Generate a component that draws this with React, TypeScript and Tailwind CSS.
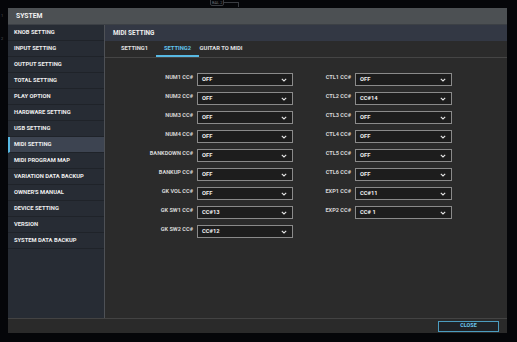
import React from "react";

const sideItems = [
  "KNOB SETTING",
  "INPUT SETTING",
  "OUTPUT SETTING",
  "TOTAL SETTING",
  "PLAY OPTION",
  "HARDWARE SETTING",
  "USB SETTING",
  "MIDI SETTING",
  "MIDI PROGRAM MAP",
  "VARIATION DATA BACKUP",
  "OWNER'S MANUAL",
  "DEVICE SETTING",
  "VERSION",
  "SYSTEM DATA BACKUP",
];

const leftRows: [string, string][] = [
  ["NUM1 CC#", "OFF"],
  ["NUM2 CC#", "OFF"],
  ["NUM3 CC#", "OFF"],
  ["NUM4 CC#", "OFF"],
  ["BANKDOWN CC#", "OFF"],
  ["BANKUP CC#", "OFF"],
  ["GK VOL CC#", "OFF"],
  ["GK SW1 CC#", "CC#13"],
  ["GK SW2 CC#", "CC#12"],
];

const rightRows: [string, string][] = [
  ["CTL1 CC#", "OFF"],
  ["CTL2 CC#", "CC#14"],
  ["CTL3 CC#", "OFF"],
  ["CTL4 CC#", "OFF"],
  ["CTL5 CC#", "OFF"],
  ["CTL6 CC#", "OFF"],
  ["EXP1 CC#", "CC#11"],
  ["EXP2 CC#", "CC# 1"],
];

function Chevron() {
  return (
    <svg width="6" height="4" viewBox="0 0 6 4" className="shrink-0">
      <path d="M0.8 0.8 L3 3 L5.2 0.8" fill="none" stroke="#e6e6e6" strokeWidth="1.1" />
    </svg>
  );
}

function Row({ label, value, boxW }: { label: string; value: string; boxW: string }) {
  return (
    <div className="flex items-center h-[19px]">
      <div className="w-[48px] text-right text-[5.6px] font-bold text-[#d6d6d6] leading-none whitespace-nowrap -mt-[3px]">
        {label}
      </div>
      <div
        className={`ml-[4px] h-[13px] ${boxW} border border-[#8a8a8a] bg-[#1d1d1d] flex items-center justify-between pl-[4px] pr-[5px]`}
      >
        <span className="text-[5.8px] font-bold text-[#f0f0f0] leading-none">{value}</span>
        <Chevron />
      </div>
    </div>
  );
}

export default function App() {
  return (
    <div
      className="relative w-[517px] h-[342px] bg-[#050609] overflow-hidden pt-[8px] pl-[8px]"
      style={{ fontFamily: "Roboto, 'Liberation Sans', sans-serif" }}
    >
      {/* faint background app remnants */}
      <div className="absolute left-[210px] -top-[2px] h-[8px] border border-[#3a3d42] rounded-[2px] text-[4px] text-[#6a6d72] leading-[7px] pl-[1px] w-[14px]">
        BAL 2
      </div>
      <div className="absolute left-[224px] top-[2px] w-[15px] h-[5px] border-t border-r border-[#3a3d42]" />
      <div className="absolute left-[1px] top-[13px] text-[4px] text-[#55585c]">1</div>
      <div className="absolute left-[1px] top-[36px] text-[4px] text-[#55585c]">2</div>

      <div className="w-[499px] h-[325px] flex flex-col bg-[#2b2b2b]">
        {/* Title bar */}
        <div className="h-[17px] bg-[#4c5053] border-b border-[#3c4045] flex items-center pl-[8px]">
          <span className="text-[6.8px] font-bold text-[#f2f2f2] leading-none">SYSTEM</span>
        </div>

        {/* Body */}
        <div className="flex h-[293px]">
          {/* Sidebar */}
          <div className="w-[97px] bg-[#272c34] border-r border-[#4e5156] flex flex-col">
            {sideItems.map((it) => {
              const active = it === "MIDI SETTING";
              return (
                <div
                  key={it}
                  className={`h-[16px] flex items-center border-b border-[#1f2329] ${
                    active ? "bg-[#3d4451] border-l-[2px] border-l-[#58b9e3] pl-[4px]" : "pl-[6px]"
                  }`}
                >
                  <span className="text-[5.8px] font-bold text-[#eeeeee] leading-none whitespace-nowrap">
                    {it}
                  </span>
                </div>
              );
            })}
          </div>

          {/* Right panel */}
          <div className="flex-1 flex flex-col">
            <div className="h-[16px] bg-[#333844] flex items-center pl-[8px]">
              <span className="text-[6.4px] font-bold text-[#f0f0f0] leading-none">MIDI SETTING</span>
            </div>
            <div className="h-[17px] flex pl-[8px] border-b border-[#454545]">
              <div className="w-[43px] flex items-center justify-center">
                <span className="text-[5.8px] font-bold text-[#e0e0e0] leading-none">SETTING1</span>
              </div>
              <div className="w-[43px] flex items-center justify-center border-b-[2px] border-[#58b9e3] pt-[2px]">
                <span className="text-[5.8px] font-bold text-[#62c4ee] leading-none">SETTING2</span>
              </div>
              <div className="w-[44px] flex items-center justify-center">
                <span className="text-[5.8px] font-bold text-[#e0e0e0] leading-none whitespace-nowrap">
                  GUITAR TO MIDI
                </span>
              </div>
            </div>

            <div className="flex pl-[40px] pt-[12px] gap-[10px]">
              <div className="flex flex-col">
                {leftRows.map(([l, v]) => (
                  <Row key={l} label={l} value={v} boxW="w-[96px]" />
                ))}
              </div>
              <div className="flex flex-col">
                {rightRows.map(([l, v]) => (
                  <Row key={l} label={l} value={v} boxW="w-[97px]" />
                ))}
              </div>
            </div>
          </div>
        </div>

        {/* Footer */}
        <div className="h-[15px] border-t border-[#434343] bg-[#2a2a2a] flex items-center justify-end pr-[8px]">
          <div className="w-[61px] h-[11px] border border-[#4b9cc0] bg-[#1f2226] flex items-center justify-center">
            <span className="text-[5.4px] font-bold text-[#6cc6ef] leading-none">CLOSE</span>
          </div>
        </div>
      </div>
    </div>
  );
}
